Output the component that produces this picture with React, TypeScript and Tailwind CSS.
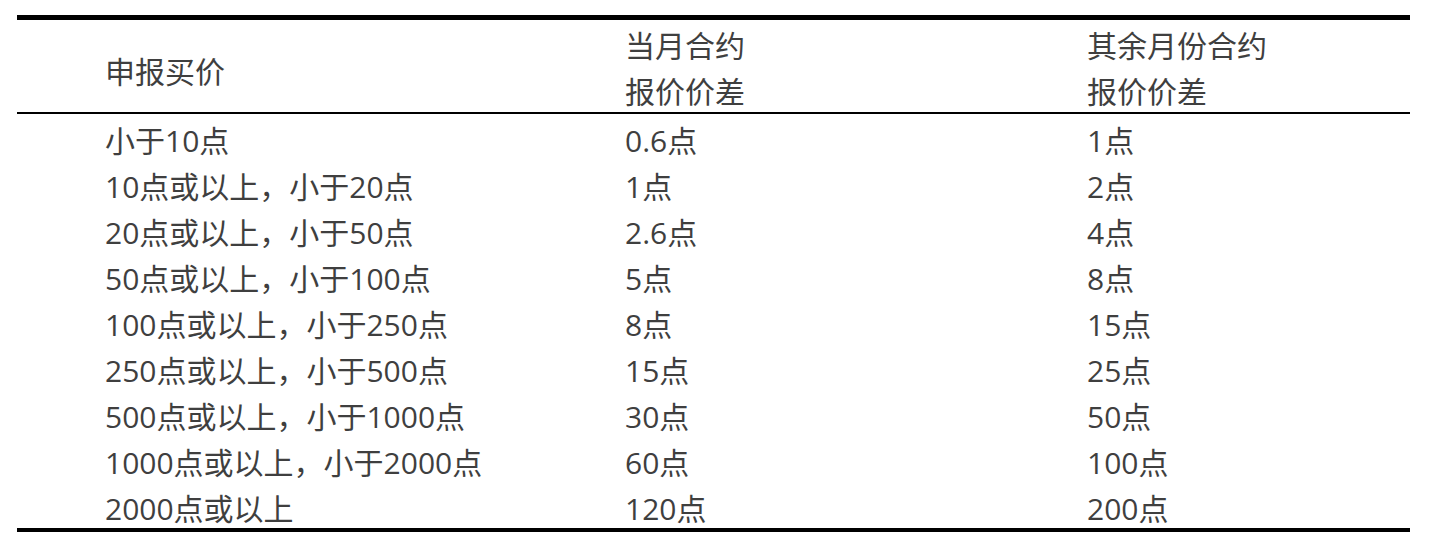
import React from "react";

const rows: [string, string, string][] = [
  ["小于10点", "0.6点", "1点"],
  ["10点或以上，小于20点", "1点", "2点"],
  ["20点或以上，小于50点", "2.6点", "4点"],
  ["50点或以上，小于100点", "5点", "8点"],
  ["100点或以上，小于250点", "8点", "15点"],
  ["250点或以上，小于500点", "15点", "25点"],
  ["500点或以上，小于1000点", "30点", "50点"],
  ["1000点或以上，小于2000点", "60点", "100点"],
  ["2000点或以上", "120点", "200点"],
];

export default function App() {
  return (
    <div
      className="w-[1433px] h-[555px] bg-white text-[#3f3f3f] overflow-hidden"
      style={{ fontFamily: '"Open Sans", "Noto Sans CJK SC", sans-serif' }}
    >
      <div className="h-[15px] overflow-hidden">
        <div className="-mt-[40px] pl-[88px] text-[30px] leading-[46px] whitespace-nowrap">
          恒生指数期货合约的最低报价价差及其他月份合约报价价差规定如下表所示
        </div>
      </div>
      <div className="ml-[17px] w-[1393px] border-t-[5px] border-b-[4px] border-black text-[30px]">
        <div className="grid grid-cols-[608px_462px_1fr] h-[94px] border-b-2 border-black">
          <div className="pl-[88px] pt-[8px] flex items-center leading-[46px]">申报买价</div>
          <div className="pt-[3px] leading-[46px]">
            <div>当月合约</div>
            <div>报价价差</div>
          </div>
          <div className="pt-[3px] leading-[46px]">
            <div>其余月份合约</div>
            <div>报价价差</div>
          </div>
        </div>
        <div>
          {rows.map((r, i) => (
            <div key={i} className="grid grid-cols-[608px_462px_1fr] h-[46px] pt-[7px] leading-[39px]">
              <div className="pl-[88px] whitespace-nowrap">{r[0]}</div>
              <div>{r[1]}</div>
              <div>{r[2]}</div>
            </div>
          ))}
        </div>
      </div>
    </div>
  );
}
